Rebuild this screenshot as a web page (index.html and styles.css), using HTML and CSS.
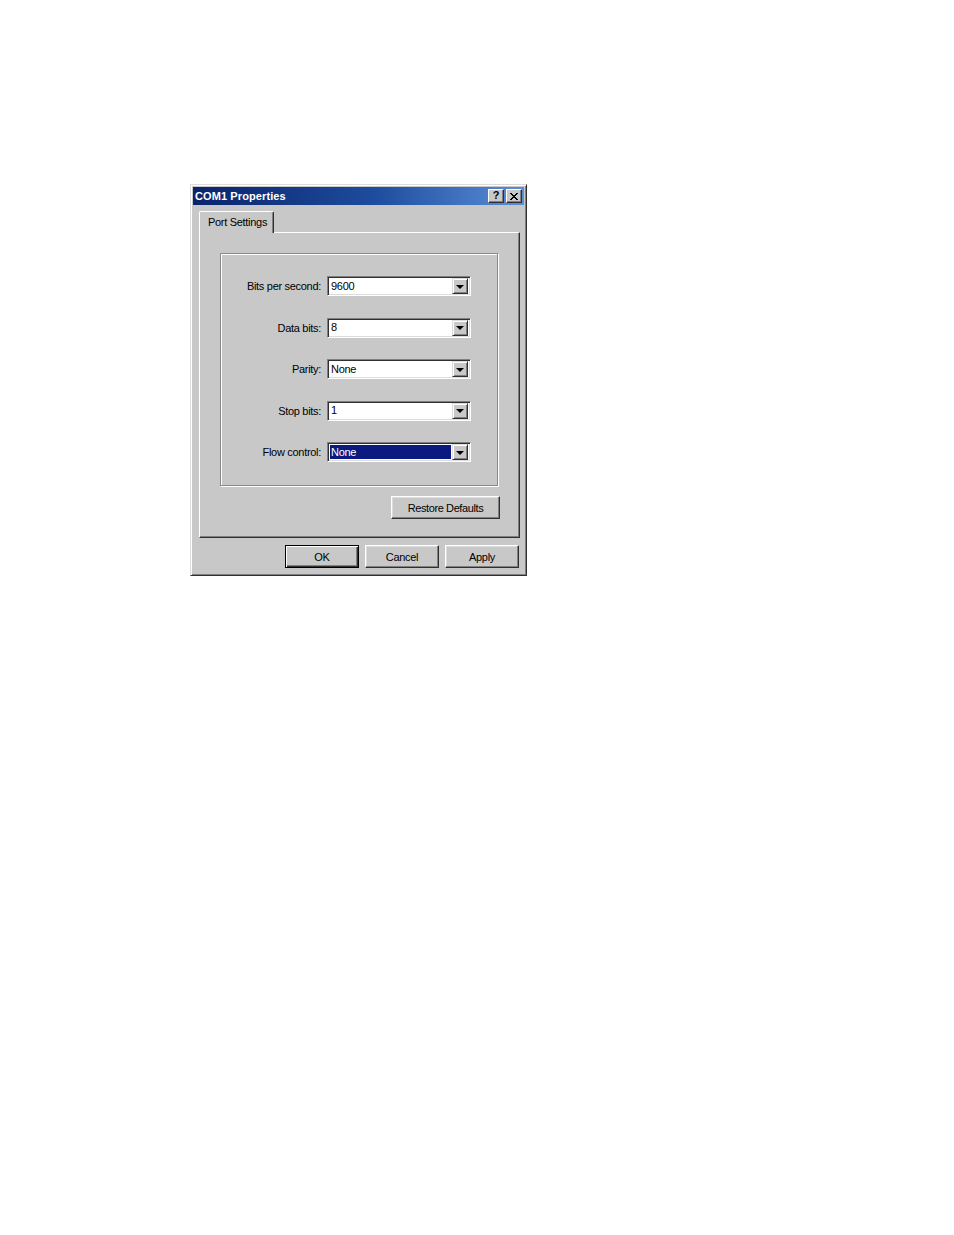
FILE: index.html
```html
<!DOCTYPE html>
<html>
<head>
<meta charset="utf-8">
<title>COM1 Properties</title>
<link rel="stylesheet" href="styles.css">
</head>
<body>
<div class="stage">
  <div class="window">
    <div class="titlebar">
      <span class="title">COM1 Properties</span>
      <div class="caption-buttons">
        <span class="cap-btn help">?</span>
        <span class="cap-btn close">
          <svg width="8" height="7" viewBox="0 0 8 7" shape-rendering="crispEdges">
            <path d="M0 0h2v1h-2zM6 0h2v1h-2zM1 1h2v1h-2zM5 1h2v1h-2zM2 2h4v1h-4zM3 3h2v1h-2zM2 4h4v1h-4zM1 5h2v1h-2zM5 5h2v1h-2zM0 6h2v1h-2zM6 6h2v1h-2z" fill="#000"/>
          </svg>
        </span>
      </div>
    </div>
    <div class="client">
      <div class="tabs">
        <div class="tab">Port Settings</div>
      </div>
      <div class="panel">
        <div class="group">
          <div class="row">
            <span class="label">Bits per second:</span>
            <div class="combo"><span class="value">9600</span><span class="drop"><span class="arrow"></span></span></div>
          </div>
          <div class="row">
            <span class="label">Data bits:</span>
            <div class="combo"><span class="value">8</span><span class="drop"><span class="arrow"></span></span></div>
          </div>
          <div class="row">
            <span class="label">Parity:</span>
            <div class="combo"><span class="value">None</span><span class="drop"><span class="arrow"></span></span></div>
          </div>
          <div class="row">
            <span class="label">Stop bits:</span>
            <div class="combo"><span class="value">1</span><span class="drop"><span class="arrow"></span></span></div>
          </div>
          <div class="row">
            <span class="label">Flow control:</span>
            <div class="combo focused"><span class="value">None</span><span class="drop"><span class="arrow"></span></span></div>
          </div>
        </div>
        <div class="panel-actions">
          <button class="btn restore">Restore Defaults</button>
        </div>
      </div>
      <div class="dialog-actions">
        <button class="btn default">OK</button>
        <button class="btn">Cancel</button>
        <button class="btn">Apply</button>
      </div>
    </div>
  </div>
</div>
</body>
</html>
```
FILE: styles.css
```css
html, body {
  margin: 0;
  padding: 0;
  background: #ffffff;
}

body {
  font-family: "Liberation Sans", Arial, sans-serif;
  font-size: 11px;
  letter-spacing: -0.3px;
  color: #000;
}

.stage {
  padding: 184px 0 0 190px;
}

.window {
  box-sizing: border-box;
  width: 337px;
  height: 392px;
  background: #c8c8c8;
  border: 1px solid;
  border-color: #dcdcdc #303030 #303030 #dcdcdc;
  box-shadow: inset 1px 1px #ffffff, inset -1px -1px #808080;
  padding: 2px;
  display: flex;
  flex-direction: column;
}

.titlebar {
  height: 18px;
  background: linear-gradient(to right, #0a246a 0%, #1e4c9e 55%, #5a8fd8 100%);
  display: flex;
  align-items: center;
  justify-content: space-between;
  padding: 0 2px 0 2px;
}

.title {
  color: #fff;
  font-weight: bold;
  font-size: 11px;
  letter-spacing: 0.1px;
}

.caption-buttons {
  display: flex;
  gap: 2px;
}

.cap-btn {
  box-sizing: border-box;
  width: 16px;
  height: 14px;
  background: #c8c8c8;
  border: 1px solid;
  border-color: #ffffff #303030 #303030 #ffffff;
  box-shadow: inset -1px -1px #808080;
  display: flex;
  align-items: center;
  justify-content: center;
  letter-spacing: 0;
}

.cap-btn.help {
  font-weight: bold;
  font-size: 11px;
  line-height: 1;
  padding-bottom: 1px;
}

.client {
  flex: 1;
  padding: 6px 5px 0 6px;
  display: flex;
  flex-direction: column;
}

.tabs {
  display: flex;
  height: 21px;
  position: relative;
  z-index: 1;
}

.tab {
  box-sizing: border-box;
  width: 75px;
  height: 22px;
  padding: 4px 0 0 8px;
  background: #c8c8c8;
  border-top: 1px solid #ffffff;
  border-left: 1px solid #ffffff;
  border-right: 1px solid #303030;
  box-shadow: inset -1px 0 #808080;
  border-top-left-radius: 2px;
  border-top-right-radius: 2px;
}

.panel {
  box-sizing: border-box;
  width: 321px;
  height: 306px;
  border: 1px solid;
  border-color: #ffffff #303030 #303030 #ffffff;
  box-shadow: inset -1px -1px #808080;
  padding: 20px 21px 0 20px;
  display: flex;
  flex-direction: column;
}

.group {
  box-sizing: border-box;
  height: 233px;
  border: 1px solid #8a8a8a;
  box-shadow: inset 1px 1px #ffffff, 1px 1px #ffffff;
  padding: 22px 26px 0 0;
  display: flex;
  flex-direction: column;
  gap: 21.5px;
}

.row {
  display: flex;
  align-items: center;
  justify-content: flex-end;
  gap: 6px;
  height: 20px;
}

.label {
  white-space: nowrap;
}

.combo {
  box-sizing: border-box;
  width: 144px;
  height: 20px;
  background: #fff;
  border: 1px solid;
  border-color: #808080 #ffffff #ffffff #808080;
  box-shadow: inset 1px 1px #303030, inset -1px -1px #dcdcdc;
  padding: 2px;
  display: flex;
  align-items: stretch;
}

.combo .value {
  flex: 1;
  display: flex;
  align-items: center;
  padding-left: 1px;
  line-height: 1;
}

.combo.focused .value {
  background: #0a1a80;
  color: #fff;
  margin-right: 1px;
}

.drop {
  box-sizing: border-box;
  width: 16px;
  margin: -1px 0 -1px 0;
  background: #c8c8c8;
  border: 1px solid;
  border-color: #dcdcdc #303030 #303030 #dcdcdc;
  box-shadow: inset 1px 1px #ffffff, inset -1px -1px #808080;
  display: flex;
  align-items: center;
  justify-content: center;
}

.arrow {
  width: 0;
  height: 0;
  border-left: 4px solid transparent;
  border-right: 4px solid transparent;
  border-top: 4px solid #000;
  margin-top: 1px;
}

.panel-actions {
  display: flex;
  justify-content: flex-end;
  margin-top: 10px;
  margin-right: -2px;
}

.btn {
  box-sizing: border-box;
  height: 23px;
  width: 74px;
  background: #c8c8c8;
  font-family: "Liberation Sans", Arial, sans-serif;
  font-size: 11px;
  letter-spacing: -0.3px;
  color: #000;
  border: 1px solid;
  border-color: #ffffff #303030 #303030 #ffffff;
  box-shadow: inset -1px -1px #808080, inset 1px 1px #dcdcdc;
  padding: 0;
  margin: 0;
}

.btn.restore {
  width: 109px;
  letter-spacing: -0.4px;
}

.btn.default {
  border: 1px solid #000;
  box-shadow: inset 1px 1px #ffffff, inset -1px -1px #303030, inset -2px -2px #808080;
}

.dialog-actions {
  display: flex;
  justify-content: flex-end;
  gap: 6px;
  margin-top: 7px;
  width: 320px;
}
```
